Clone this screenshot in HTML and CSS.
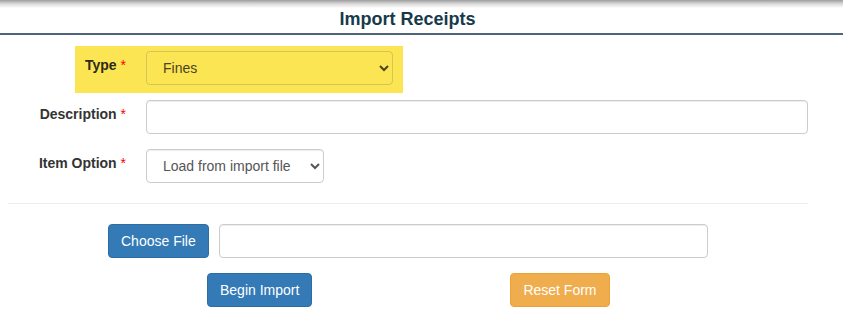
FILE: index.html
```html
<!DOCTYPE html>
<html lang="en">
<head>
<meta charset="utf-8">
<title>Import Receipts</title>
<link rel="stylesheet" href="styles.css">
</head>
<body>
<div class="top-shadow"></div>
<header class="header">
  <h1 class="title">Import Receipts</h1>
</header>
<form class="form">
  <div class="row row-hl">
    <label class="lbl lbl-hl">Type <span class="req">*</span></label>
    <select class="ctl sel-type"><option>Fines</option></select>
  </div>
  <div class="row">
    <label class="lbl">Description <span class="req">*</span></label>
    <input class="ctl desc" type="text">
  </div>
  <div class="row">
    <label class="lbl">Item Option <span class="req">*</span></label>
    <select class="ctl sel-item"><option>Load from import file</option></select>
  </div>
  <hr class="sep">
  <div class="file-row">
    <button type="button" class="btn btn-primary">Choose File</button>
    <input class="ctl file-name" type="text">
  </div>
  <div class="actions">
    <button type="button" class="btn btn-primary">Begin Import</button>
    <button type="button" class="btn btn-warning">Reset Form</button>
  </div>
</form>
</body>
</html>
```
FILE: styles.css
```css
* { box-sizing: border-box; }
html, body { margin: 0; padding: 0; background: #fff; }
body {
  font-family: "Liberation Sans", Arial, Helvetica, sans-serif;
  font-size: 14px;
  line-height: 20px;
  color: #333;
}
.top-shadow {
  height: 8px;
  background: linear-gradient(to bottom, #9c9c9c 0%, #d6d6d6 45%, #ffffff 100%);
}
.header {
  padding: 1px 28px 4px 0;
  border-bottom: 2px solid #4f657b;
}
.title {
  margin: 0;
  font-size: 18px;
  line-height: 20px;
  font-weight: bold;
  color: #163a4b;
  text-align: center;
}
.form {
  width: 800px;
  margin: 11px 0 0 8px;
}
.row {
  display: flex;
  align-items: flex-start;
  gap: 20px;
  margin-bottom: 15px;
}
.row-hl {
  width: 328px;
  margin-left: 67px;
  padding: 5px 10px 8px 0;
  margin-bottom: 7px;
  background: #fce553;
}
.lbl {
  width: 118px;
  flex: none;
  padding-top: 4px;
  text-align: right;
  font-weight: bold;
  color: #333;
}
.lbl-hl { width: 51px; color: #2b2a1a; }
.req { color: #f00; font-weight: normal; }
.ctl {
  height: 34px;
  padding: 6px 12px;
  font-family: inherit;
  font-size: 14px;
  line-height: 20px;
  color: #555;
  background: #fff;
  border: 1px solid #ccc;
  border-radius: 4px;
  box-shadow: inset 0 1px 1px rgba(0,0,0,.075);
  flex: none;
}
.sel-type {
  width: 247px;
  background: transparent;
  border-color: #d5c45a;
  color: #4a4420;
  box-shadow: none;
}
.desc { width: 662px; }
.sel-item { width: 178px; }
.sep {
  margin: 20px 0;
  border: 0;
  border-top: 1px solid #eee;
  height: 0;
}
.file-row {
  display: flex;
  gap: 10px;
  padding-left: 100px;
}
.file-name { width: 489px; }
.actions {
  display: flex;
  gap: 198px;
  margin-top: 15px;
  padding-left: 199px;
}
.btn {
  height: 34px;
  padding: 6px 12px;
  font-family: inherit;
  font-size: 14px;
  line-height: 20px;
  color: #fff;
  border: 1px solid transparent;
  border-radius: 4px;
  cursor: pointer;
}
.btn-primary { background: #337ab7; border-color: #2e6da4; }
.btn-warning { background: #f0ad4e; border-color: #eea236; }
```
